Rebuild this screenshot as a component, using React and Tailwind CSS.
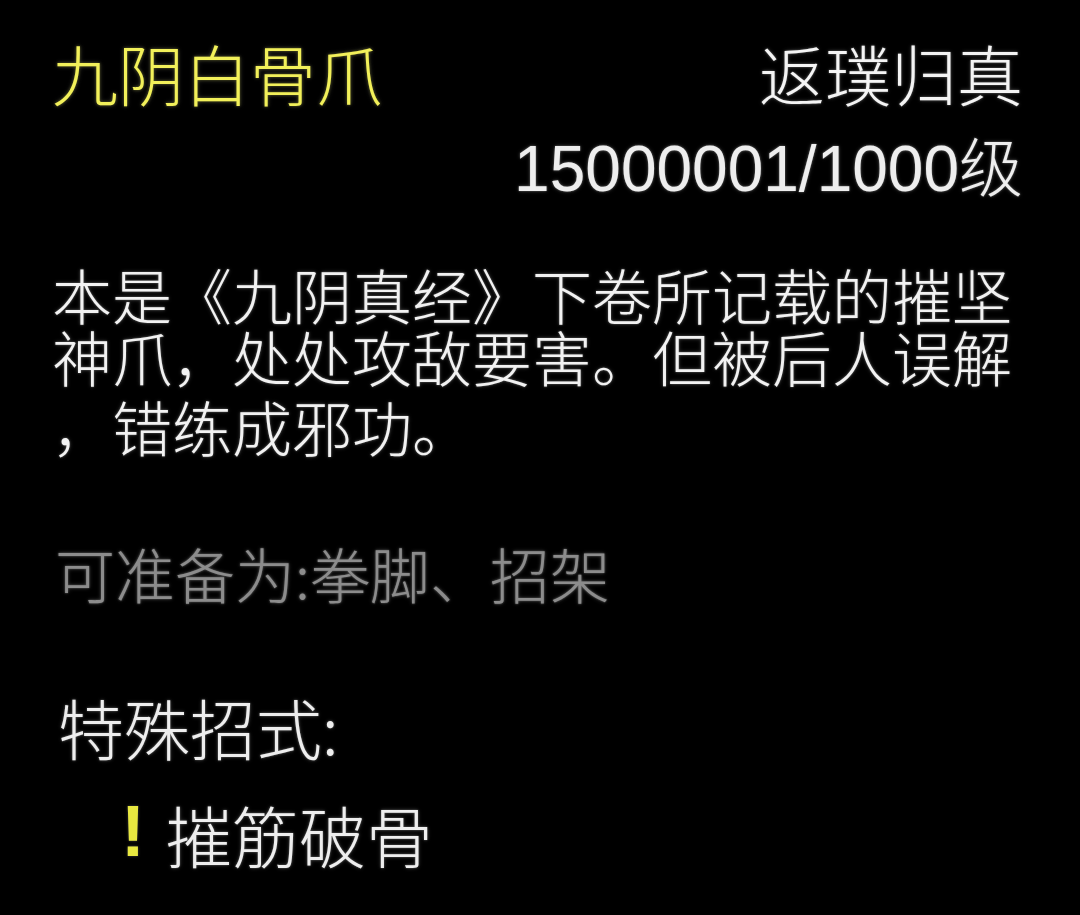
import React from "react";

const cjk = "font-['Noto_Sans_CJK_SC',sans-serif]";
const glow = "[text-shadow:0_0_2px_#666,0_0_4px_#333]";

const descLines = [
  "本是《九阴真经》下卷所记载的摧坚",
  "神爪，处处攻敌要害。但被后人误解",
];

export default function App() {
  return (
    <div className={`w-full h-[915px] bg-black overflow-hidden ${cjk} font-light`}>
      {/* 头部：名称 + 境界 */}
      <div className="flex justify-between pl-[52px] pr-[57px] pt-[39px]">
        <div className={`text-[66px] leading-none text-[#f2f05a] [text-shadow:0_0_3px_#5a5a20,0_0_5px_#333]`}>
          九阴白骨爪
        </div>
        <div className="flex flex-col items-end">
          <div className={`text-[66px] leading-none text-[#f4f4f4] ${glow}`}>
            返璞归真
          </div>
          <div
            className={`mt-[32px] text-[64px] leading-none text-[#eeeeee] font-['Liberation_Sans','Noto_Sans_CJK_SC',sans-serif] ${glow}`}
          >
            15000001/1000级
          </div>
        </div>
      </div>

      {/* 描述 */}
      <div className={`mt-[62px] pl-[52px] text-[60px] leading-[62px] text-[#f2f2f2] ${glow}`}>
        {descLines.map((line) => (
          <div key={line}>{line}</div>
        ))}
        <div className="mt-[8px]">，错练成邪功。</div>
      </div>

      {/* 可准备 */}
      <div className={`mt-[86px] pl-[55px] text-[60px] leading-none text-[#8c8c8c] ${glow}`}>
        可准备为:拳脚、招架
      </div>

      {/* 特殊招式 */}
      <div className={`mt-[90px] pl-[58px] text-[66px] leading-none text-[#eeeeee] ${glow}`}>
        特殊招式:
      </div>
      <div className="mt-[36px] pl-[121px] flex items-end gap-[20px]">
        <span className="text-[72px] leading-none font-bold text-[#e8e840] font-['Liberation_Sans',sans-serif] [text-shadow:0_0_3px_#444]">
          !
        </span>
        <span className={`text-[67px] leading-none text-[#eeeeee] ${glow}`}>摧筋破骨</span>
      </div>
    </div>
  );
}
